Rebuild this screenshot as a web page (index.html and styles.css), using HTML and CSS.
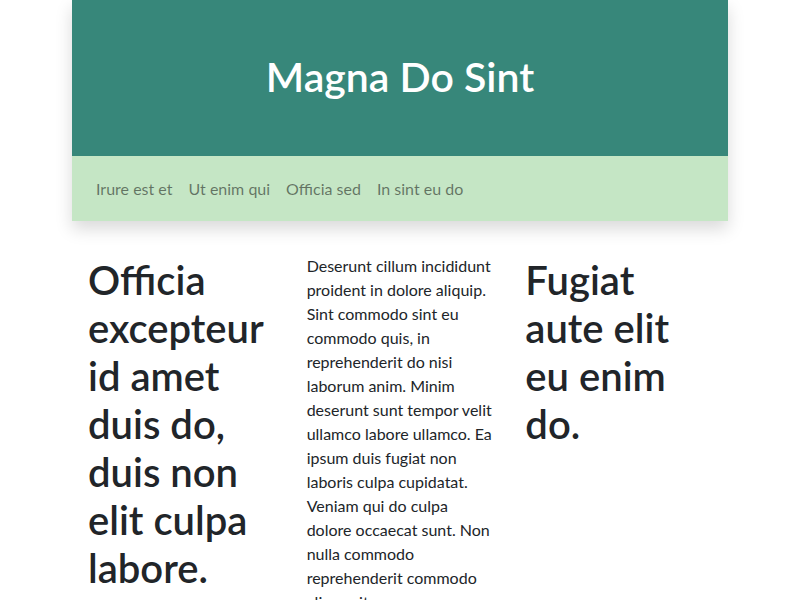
FILE: index.html
```html
<!DOCTYPE html>
<html lang="en">
<head>
<meta charset="utf-8">
<title>Magna Do Sint</title>
<link rel="stylesheet" href="styles.css">
</head>
<body>
<div class="container">
  <header class="site-header">
    <div class="banner">
      <h1 class="title">Magna Do Sint</h1>
    </div>
    <nav class="nav">
      <a class="nav-link" href="#">Irure est et</a>
      <a class="nav-link" href="#">Ut enim qui</a>
      <a class="nav-link" href="#">Officia sed</a>
      <a class="nav-link" href="#">In sint eu do</a>
    </nav>
  </header>
  <main class="row">
    <div class="col">
      <h2 class="heading">Officia excepteur id amet duis do, duis non elit culpa labore.</h2>
    </div>
    <div class="col">
      <p class="text">Deserunt cillum incididunt proident in dolore aliquip. Sint commodo sint eu commodo quis, in reprehenderit do nisi laborum anim. Minim deserunt sunt tempor velit ullamco labore ullamco. Ea ipsum duis fugiat non laboris culpa cupidatat. Veniam qui do culpa dolore occaecat sunt. Non nulla commodo reprehenderit commodo aliqua sit.</p>
    </div>
    <div class="col">
      <h2 class="heading">Fugiat aute elit eu enim do.</h2>
    </div>
  </main>
</div>
</body>
</html>
```
FILE: styles.css
```css
* { box-sizing: border-box; }
html, body { margin: 0; padding: 0; }
body {
  font-family: Lato, "Liberation Sans", sans-serif;
  font-size: 16px;
  line-height: 1.5;
  color: #212529;
  background: #fff;
}
.container {
  width: 656px;
  margin: 0 auto;
}
.site-header {
  box-shadow: 0 8px 16px rgba(0, 0, 0, 0.15);
}
.banner {
  background: #37877a;
  padding: 53px 16px 55px;
  text-align: center;
}
.title {
  margin: 0;
  font-size: 41px;
  line-height: 48px;
  font-weight: 600;
  color: #fff;
}
.nav {
  background: #c5e6c5;
  display: flex;
  padding: 13px 16px 12px;
}
.nav-link {
  display: block;
  padding: 8px;
  color: rgba(0, 0, 0, 0.5);
  text-decoration: none;
  line-height: 24px;
}
.row {
  display: grid;
  grid-template-columns: repeat(3, 1fr);
  padding-top: 33px;
}
.col {
  padding: 0 16px;
  min-width: 0;
}
.heading {
  margin: 2px 0 0;
  font-size: 40px;
  line-height: 48px;
  font-weight: 600;
}
.text {
  margin: 0;
}
```
